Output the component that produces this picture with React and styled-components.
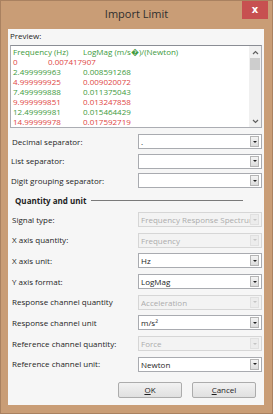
import styled, { createGlobalStyle } from "styled-components";

const GlobalStyle = createGlobalStyle`
  html, body {
    margin: 0;
    padding: 0;
    background: #c99d76;
  }
  body {
    font-family: "Open Sans", "Noto Sans", sans-serif;
  }
`;

// window chrome
const Window = styled.div`
  width: 273px;
  height: 414px;
  box-sizing: border-box;
  background: #c99d76;
  border: 1px solid #a98160;
  display: flex;
  flex-direction: column;
`;

const TitleBar = styled.div`
  height: 28px;
  display: grid;
  grid-template-columns: 30px 1fr 30px;
  align-items: start;
`;

const Title = styled.div`
  grid-column: 2;
  text-align: center;
  font-size: 11px;
  line-height: 26px;
  color: #2e2e2e;
`;

const CloseBtn = styled.div`
  grid-column: 3;
  justify-self: end;
  margin-right: 4px;
  width: 26px;
  height: 18px;
  background: #c75050;
  color: #fff;
  font-family: "DejaVu Sans", sans-serif;
  font-weight: bold;
  font-size: 10px;
  line-height: 17px;
  text-align: center;
`;

const Client = styled.div`
  margin: 0 8px 8px 7px;
  height: 376px;
  box-sizing: border-box;
  background: #f6f6f6;
  padding: 1px 2px 7px 2px;
  display: flex;
  flex-direction: column;
`;

const Label = styled.div`
  font-size: 8px;
  line-height: 12px;
  color: #1e1e1e;
  padding-left: ${(p) => p.$indent || 0}px;
  white-space: nowrap;
`;

// preview
const Preview = styled.div`
  margin-top: 3px;
  height: 83px;
  box-sizing: border-box;
  background: #fff;
  border: 1px solid #abadb3;
  border-top-color: #8a8d94;
  display: flex;
  overflow: hidden;
`;

const PreviewText = styled.div`
  flex: 1;
  padding: 1px 0 0 2px;
  overflow: hidden;
`;

const DataLine = styled.div`
  font-size: 8px;
  line-height: 10px;
  white-space: pre;
  tab-size: 35px;
  color: ${(p) => (p.$red ? "#e0453f" : "#3d9a3d")};
`;

const ScrollBar = styled.div`
  width: 12px;
  background: #f0f0f0;
  display: flex;
  flex-direction: column;
  align-items: center;
`;

const ScrollArrow = styled.div`
  height: 12px;
  display: flex;
  align-items: center;
  justify-content: center;
`;

const Thumb = styled.div`
  width: 10px;
  height: 12px;
  background: #cdcdcd;
`;

const Spacer = styled.div`
  flex: 1;
`;

// form
const Group = styled.div`
  margin-top: ${(p) => p.$top}px;
  display: flex;
  flex-direction: column;
  gap: ${(p) => p.$gap}px;
`;

const Row = styled.div`
  display: grid;
  grid-template-columns: 1fr 124px;
  align-items: center;
  height: 15px;
`;

const Combo = styled.div`
  height: 15px;
  box-sizing: border-box;
  border: 1px solid ${(p) => (p.$disabled ? "#d6d6d6" : "#a9abb0")};
  background: ${(p) => (p.$disabled ? "#f3f3f3" : "#fff")};
  display: flex;
  align-items: center;
  padding: 1px 2px 1px 2px;
  overflow: hidden;
`;

const ComboText = styled.div`
  flex: 1;
  font-size: 8px;
  line-height: 11px;
  color: ${(p) => (p.$disabled ? "#acacac" : "#1e1e1e")};
  white-space: nowrap;
  overflow: hidden;
`;

const ArrowBox = styled.div`
  width: 9px;
  height: 11px;
  box-sizing: border-box;
  border: 1px solid ${(p) => (p.$disabled ? "#e0e0e0" : "#b5b5b5")};
  background: ${(p) =>
    p.$disabled ? "#ececec" : "linear-gradient(#f4f4f4, #dcdcdc)"};
  display: flex;
  align-items: center;
  justify-content: center;
  &::after {
    content: "";
    border-left: 2px solid transparent;
    border-right: 2px solid transparent;
    border-top: 2px solid ${(p) => (p.$disabled ? "#c4c4c4" : "#222")};
  }
`;

const Section = styled.div`
  margin-top: 6px;
  height: 12px;
  display: flex;
  align-items: center;
  gap: 5px;
  padding-left: 5px;
  padding-right: 19px;
`;

const SectionTitle = styled.div`
  font-size: 8px;
  font-weight: bold;
  color: #1e1e1e;
  white-space: nowrap;
`;

const SectionLine = styled.div`
  flex: 1;
  height: 1px;
  background: #7a7a7a;
`;

const Buttons = styled.div`
  margin-top: 10px;
  display: flex;
  justify-content: flex-end;
  gap: 10px;
  padding-right: 6px;
`;

const Button = styled.div`
  width: 64px;
  height: 16px;
  box-sizing: border-box;
  border: 1px solid #acacac;
  border-radius: 2px;
  background: linear-gradient(#f2f2f2, #e0e0e0);
  font-size: 8px;
  line-height: 14px;
  text-align: center;
  color: #1e1e1e;
  u {
    text-decoration: underline;
  }
`;

const Chevron = ({ up }) => (
  <svg width="7" height="5" viewBox="0 0 7 5">
    <path
      d={up ? "M1 4 L3.5 1.5 L6 4" : "M1 1 L3.5 3.5 L6 1"}
      fill="none"
      stroke="#606060"
      strokeWidth="1.2"
    />
  </svg>
);

const data = [
  ["0", "0.007417907"],
  ["2.499999963", "0.008591268"],
  ["4.999999925", "0.009020072"],
  ["7.499999888", "0.011375043"],
  ["9.999999851", "0.013247858"],
  ["12.49999981", "0.015464429"],
  ["14.99999978", "0.017592719"],
  ["17.49999974", "0.020236985"],
];

const topFields = [
  { label: "Decimal separator:", value: ".", indent: 2 },
  { label: "List separator:", value: "" },
  { label: "Digit grouping separator:", value: "" },
];

const unitFields = [
  { label: "Signal type:", value: "Frequency Response Spectrum", disabled: true },
  { label: "X axis quantity:", value: "Frequency", disabled: true },
  { label: "X axis unit:", value: "Hz" },
  { label: "Y axis format:", value: "LogMag" },
  { label: "Response channel quantity", value: "Acceleration", disabled: true },
  { label: "Response channel unit", value: "m/s²" },
  { label: "Reference channel quantity:", value: "Force", disabled: true },
  { label: "Reference channel unit:", value: "Newton" },
];

function Field({ label, value, disabled, indent = 2 }) {
  return (
    <Row>
      <Label $indent={indent}>{label}</Label>
      <Combo $disabled={disabled}>
        <ComboText $disabled={disabled}>{value}</ComboText>
        <ArrowBox $disabled={disabled} />
      </Combo>
    </Row>
  );
}

function App() {
  return (
    <>
      <GlobalStyle />
      <Window>
        <TitleBar>
          <Title>Import Limit</Title>
          <CloseBtn>x</CloseBtn>
        </TitleBar>
        <Client>
          <Label>Preview:</Label>
          <Preview>
            <PreviewText>
              <DataLine>{"Frequency (Hz)\tLogMag (m/s\uFFFD)/(Newton)"}</DataLine>
              {data.map((d, i) => (
                <DataLine key={i} $red={i % 2 === 0}>
                  {d[0] + "\t" + d[1]}
                </DataLine>
              ))}
            </PreviewText>
            <ScrollBar>
              <ScrollArrow>
                <Chevron up />
              </ScrollArrow>
              <Thumb />
              <Spacer />
              <ScrollArrow>
                <Chevron />
              </ScrollArrow>
            </ScrollBar>
          </Preview>

          <Group $top={6} $gap={4.5}>
            {topFields.map((f) => (
              <Field key={f.label} {...f} indent={f.indent ?? 1} />
            ))}
          </Group>

          <Section>
            <SectionTitle>Quantity and unit</SectionTitle>
            <SectionLine />
          </Section>

          <Group $top={6} $gap={5.7}>
            {unitFields.map((f) => (
              <Field key={f.label} {...f} />
            ))}
          </Group>

          <Buttons>
            <Button>
              <u>O</u>K
            </Button>
            <Button>
              <u>C</u>ancel
            </Button>
          </Buttons>
        </Client>
      </Window>
    </>
  );
}

export default App;
